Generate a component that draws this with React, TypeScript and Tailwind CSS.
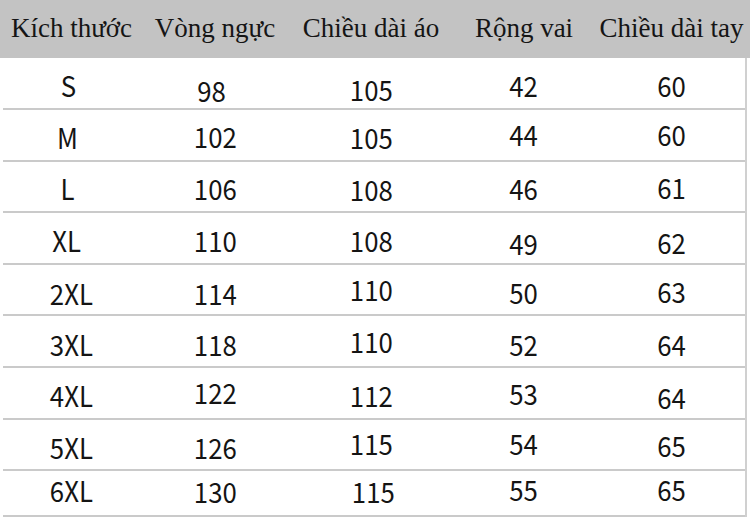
type Cell = { text: string; cls: string };

interface IRow {
    height: string;
    cells: Cell[];
}

const headers = ["Kích thước", "Vòng ngực", "Chiều dài áo", "Rộng vai", "Chiều dài tay"];

// small vertical drifts copied from the chart
const rows: IRow[] = [
    {
        height: "h-[52px]", cells: [
            { text: "S", cls: "translate-y-[2px] -translate-x-[3px]" },
            { text: "98", cls: "translate-y-[7px] -translate-x-[3px]" },
            { text: "105", cls: "translate-y-[6px]" },
            { text: "42", cls: "translate-y-[2px]" },
            { text: "60", cls: "translate-y-[2px]" },
        ]
    },
    {
        height: "h-[52px]", cells: [
            { text: "M", cls: "translate-y-[2px] -translate-x-[4px]" },
            { text: "102", cls: "translate-y-[1px]" },
            { text: "105", cls: "translate-y-[2px]" },
            { text: "44", cls: "-translate-y-[1px]" },
            { text: "60", cls: "-translate-y-[1px]" },
        ]
    },
    {
        height: "h-[51px]", cells: [
            { text: "L", cls: "translate-y-[1px] -translate-x-[4px]" },
            { text: "106", cls: "translate-y-[1px]" },
            { text: "108", cls: "translate-y-[2px]" },
            { text: "46", cls: "translate-y-[1px]" },
            { text: "61", cls: "translate-y-[0px]" },
        ]
    },
    {
        height: "h-[52px]", cells: [
            { text: "XL", cls: "translate-y-[2px] -translate-x-[5px]" },
            { text: "110", cls: "translate-y-[2px]" },
            { text: "108", cls: "translate-y-[2px]" },
            { text: "49", cls: "translate-y-[5px]" },
            { text: "62", cls: "translate-y-[4px]" },
        ]
    },
    {
        height: "h-[51px]", cells: [
            { text: "2XL", cls: "translate-y-[3px]" },
            { text: "114", cls: "translate-y-[3px]" },
            { text: "110", cls: "-translate-y-[1px]" },
            { text: "50", cls: "translate-y-[2px]" },
            { text: "63", cls: "translate-y-[1px]" },
        ]
    },
    {
        height: "h-[52px]", cells: [
            { text: "3XL", cls: "translate-y-[3px]" },
            { text: "118", cls: "translate-y-[3px]" },
            { text: "110", cls: "translate-y-[0px]" },
            { text: "52", cls: "translate-y-[3px]" },
            { text: "64", cls: "translate-y-[3px]" },
        ]
    },
    {
        height: "h-[52px]", cells: [
            { text: "4XL", cls: "translate-y-[2px]" },
            { text: "122", cls: "-translate-y-[1px]" },
            { text: "112", cls: "translate-y-[2px]" },
            { text: "53", cls: "translate-y-[0px]" },
            { text: "64", cls: "translate-y-[4px]" },
        ]
    },
    {
        height: "h-[51px]", cells: [
            { text: "5XL", cls: "translate-y-[2px]" },
            { text: "126", cls: "translate-y-[2px]" },
            { text: "115", cls: "-translate-y-[2px]" },
            { text: "54", cls: "-translate-y-[2px]" },
            { text: "65", cls: "translate-y-[0px]" },
        ]
    },
    {
        height: "h-[46px]", cells: [
            { text: "6XL", cls: "-translate-y-[3px]" },
            { text: "130", cls: "-translate-y-[2px]" },
            { text: "115", cls: "-translate-y-[2px] translate-x-[2px]" },
            { text: "55", cls: "-translate-y-[4px]" },
            { text: "65", cls: "-translate-y-[4px]" },
        ]
    },
];

const cols = "grid grid-cols-[137px_150px_162px_144px_151px]";

const App = () => {
    return (
        <div className="w-[750px] h-[519px] bg-white overflow-hidden">
            <div className="h-[58px] bg-[#c3c3c3] pl-[3px]">
                <div className={`${cols} h-full items-center pb-[2px]`}>
                    {headers.map((h) => (
                        <p key={h} className="text-center text-[27px] text-[#151515] whitespace-nowrap font-['Liberation_Serif',serif]">
                            {h}
                        </p>
                    ))}
                </div>
            </div>
            <div className="mx-[3px] border-r-2 border-[#d0d0d0]">
                {rows.map((row, i) => (
                    <div key={i} className={`${cols} ${row.height} items-center border-b-2 border-[#cacaca]`}>
                        {row.cells.map((c, j) => (
                            <div key={j} className={`flex justify-center ${c.cls}`}>
                                <p className="text-[28px] leading-none scale-x-[0.92] text-[#141414] font-['Noto_Sans_CJK_SC','Noto_Sans',sans-serif]">
                                    {c.text}
                                </p>
                            </div>
                        ))}
                    </div>
                ))}
            </div>
        </div>
    );
};

export default App;
